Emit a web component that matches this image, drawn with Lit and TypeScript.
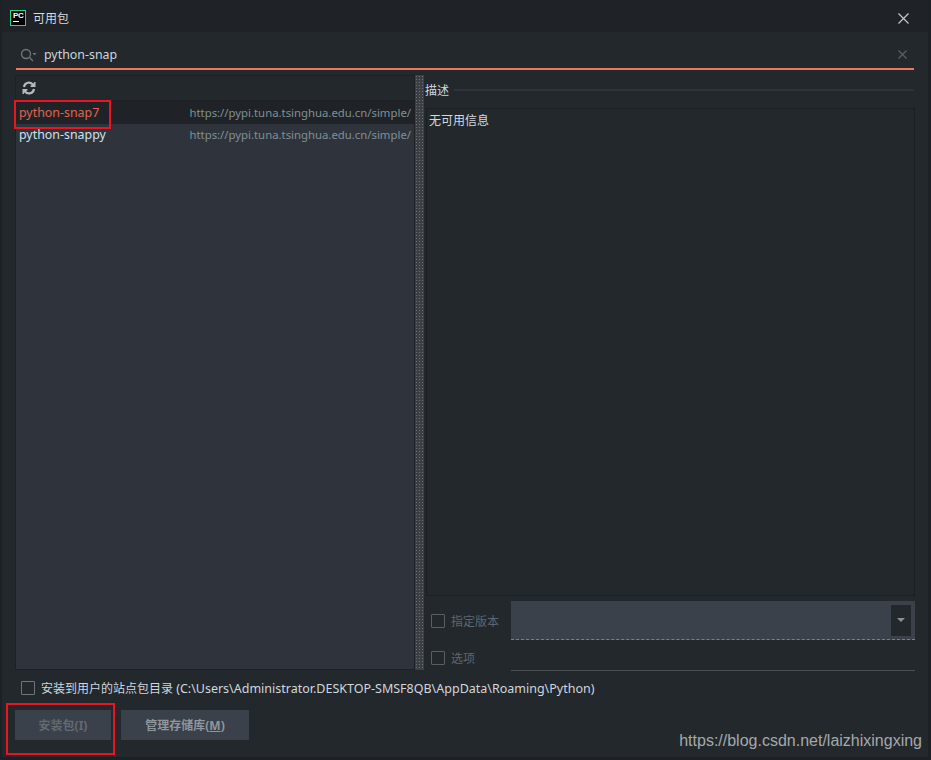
import { LitElement, html, css } from "lit";
import { customElement } from "lit/decorators.js";

@customElement("app-root")
export class AppRoot extends LitElement {
  static styles = css`
    :host { display: block; width: 931px; height: 760px; background: #1d2125; font-family: "Noto Sans", "Noto Sans CJK SC", sans-serif; overflow: hidden; }
    .win { position: relative; box-sizing: border-box; width: 926px; height: 757px; margin-left: 2px; background: #23282c; display: flex; flex-direction: column; color: #cfd6dc; font-size: 12px; }
    .title { height: 32px; box-sizing: border-box; padding: 4px 0 0 8px; background: #1f2327; display: flex; align-items: center; gap: 7px; flex: none; }
    .logo { width: 16px; height: 16px; box-sizing: border-box; background: #000; border: 1px solid #21d789; display: flex; flex-direction: column; color: #fff; font: 700 8px/9px "Liberation Sans", sans-serif; padding-left: 2px; letter-spacing: -0.3px; }
    .logo i { display: block; width: 6px; height: 1px; background: #fff; margin-top: 1px; }
    .title-text { font-size: 12px; color: #d4dade; flex: 1; }
    .close { margin-right: 19px; display: flex; }
    .search { margin: 0 14px; height: 38px; box-sizing: border-box; border-bottom: 2px solid #f07560; display: flex; align-items: center; padding: 9px 7px 0 4px; gap: 7px; flex: none; }
    .search-text { flex: 1; font-size: 12.4px; color: #cdd6de; }
    .main { display: flex; margin: 5px 13px 0 13px; height: 595px; flex: none; }
    .list { width: 400px; box-sizing: border-box; background: #2f343c; border: 1px solid #1d2024; display: flex; flex-direction: column; flex: none; }
    .tools { height: 25px; box-sizing: border-box; background: #23282c; border-bottom: 1px solid #1d2024; display: flex; align-items: center; padding-left: 6px; flex: none; }
    .row { height: 22px; box-sizing: border-box; display: flex; justify-content: space-between; align-items: center; padding: 0 3px 2px 3px; font-size: 12.4px; color: #cfe0ee; }
    .row.sel { height: 23px; background: #1f2327; color: #e0644c; padding-bottom: 0; }
    .url { font-size: 11.35px; color: #7f8f93; }
    .split { width: 9px; flex: none; background-color: #3c4044; background-image: radial-gradient(#6b7074 0.6px, transparent 0.8px); background-size: 3px 3px; }
    .right { flex: 1; margin-left: 2px; display: flex; flex-direction: column; min-width: 0; }
    .head { height: 33px; display: flex; align-items: center; gap: 5px; flex: none; color: #d0d8de; font-size: 12px; padding-bottom: 3px; margin-left: -1px; box-sizing: border-box; }
    .head i { flex: 1; height: 2px; background: #2e333a; margin-right: 1px; }
    .desc { height: 488px; flex: none; box-sizing: border-box; border: 1px solid #1b1e22; padding: 2px 2px; color: #d4dade; font-size: 12px; background: #23282c; }
    .opts { display: grid; grid-template-columns: 85px 1fr; margin-top: 5px; }
    .chk { display: flex; align-items: center; gap: 6px; padding-left: 5px; color: #5d6670; font-size: 12px; }
    .box { width: 14px; height: 14px; box-sizing: border-box; border: 1px solid #5a5f64; border-radius: 1px; flex: none; }
    .combo { height: 39px; box-sizing: border-box; background: #3b414a; border-bottom: 1px dashed #7a8087; display: flex; justify-content: flex-end; align-items: center; padding-right: 4px; }
    .arrow { width: 20px; height: 31px; background: #23282c; display: flex; align-items: center; justify-content: center; }
    .opt2 { height: 31px; box-sizing: border-box; padding-top: 5px; }
    .rule { border-bottom: 1px solid #4a4f54; height: 31px; box-sizing: border-box; }
    .install { display: flex; align-items: center; gap: 6px; margin: 8px 0 0 19px; height: 20px; font-size: 12px; color: #d0d7dc; flex: none; }
    .install .box { border-color: #70757a; }
    .path { font-size: 12.5px; }
    .btns { display: flex; gap: 10px; margin: 12px 0 0 13px; flex: none; }
    button { height: 30px; border: 0; background: #3b414a; color: #8f969d; font: 700 12px "Noto Sans", "Noto Sans CJK SC", sans-serif; padding: 0; }
    button.a { width: 96px; color: #626a72; }
    button.b { width: 128px; }
    button u { text-underline-offset: 1px; }
    .mark { position: absolute; box-sizing: border-box; border: 2px solid #ea1520; }
    .m1 { left: 12px; top: 100px; width: 97px; height: 29px; }
    .m2 { left: 4px; top: 703px; width: 109px; height: 52px; }
    .wm { position: absolute; right: 6px; top: 732px; font: 16px "Liberation Sans", sans-serif; color: #a5a9ab; }
  `;

  render() {
    return html`
      <div class="win">
        <div class="title">
          <div class="logo">PC<i></i></div>
          <div class="title-text">可用包</div>
          <svg class="close" width="11" height="11" viewBox="0 0 11 11"><path d="M.5.5l10 10M10.5.5l-10 10" stroke="#c4c8cb" stroke-width="1.2" fill="none"/></svg>
        </div>
        <div class="search">
          <svg width="17" height="14" viewBox="0 0 17 14" fill="none"><circle cx="6" cy="6" r="4.5" stroke="#70767b" stroke-width="1.3"/><path d="M9.5 9.5L13 13" stroke="#70767b" stroke-width="1.3"/><path d="M12.5 5h4l-2 2.2z" fill="#70767b"/></svg>
          <div class="search-text">python-snap</div>
          <svg width="9" height="9" viewBox="0 0 9 9"><path d="M.5.5l8 8M8.5.5l-8 8" stroke="#5a5f63" stroke-width="1.2" fill="none"/></svg>
        </div>
        <div class="main">
          <div class="list">
            <div class="tools">
              <svg width="14" height="14" viewBox="0 0 14 14" fill="none" stroke="#b4babe" stroke-width="2.2"><path d="M2 6a5 5 0 0 1 9-2.3M12 8a5 5 0 0 1-9 2.3"/><path d="M12.8 1v4.2H8.6M1.2 13V8.8h4.2" stroke-width="1.4" fill="#b4babe"/></svg>
            </div>
            <div class="row sel"><span>python-snap7</span><span class="url">https://pypi.tuna.tsinghua.edu.cn/simple/</span></div>
            <div class="row"><span>python-snappy</span><span class="url">https://pypi.tuna.tsinghua.edu.cn/simple/</span></div>
          </div>
          <div class="split"></div>
          <div class="right">
            <div class="head">描述<i></i></div>
            <div class="desc">无可用信息</div>
            <div class="opts">
              <div class="chk"><span class="box"></span>指定版本</div>
              <div class="combo"><div class="arrow"><svg width="8" height="4" viewBox="0 0 8 4"><path d="M0 0h8L4 4z" fill="#8a9096"/></svg></div></div>
              <div class="chk opt2"><span class="box"></span>选项</div>
              <div class="rule"></div>
            </div>
          </div>
        </div>
        <div class="install"><span class="box"></span><span>安装到用户的站点包目录 <span class="path">(C:\\Users\\Administrator.DESKTOP-SMSF8QB\\AppData\\Roaming\\Python)</span></span></div>
        <div class="btns">
          <button class="a">安装包(I)</button>
          <button class="b">管理存储库(<u>M</u>)</button>
        </div>
        <div class="mark m1"></div>
        <div class="mark m2"></div>
        <div class="wm">https://blog.csdn.net/laizhixingxing</div>
      </div>
    `;
  }
}
